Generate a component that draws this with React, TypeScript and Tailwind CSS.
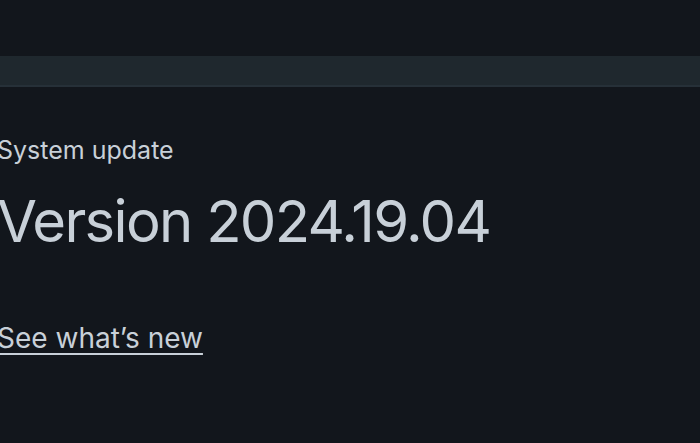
export default function App() {
  return (
    <div className="w-[700px] h-[443px] overflow-hidden bg-[#12161c] text-[#c8d0d8]" style={{ fontFamily: "Inter, 'Noto Sans', sans-serif" }}>
      <div className="h-[56px]" />
      <div className="h-[31px] bg-[#1f282e] border-b-2 border-[#263038]" />
      <div className="-ml-[3px]">
        <div className="mt-[48px] text-[25px] leading-[30px]">System update</div>
        <div className="mt-[26px] text-[58px] leading-[60px] tracking-[-1.7px]">Version 2024.19.04</div>
        <div className="mt-[70px] text-[28px] leading-[34px] underline underline-offset-[5px] decoration-[2px]">See what’s new</div>
      </div>
    </div>
  );
}
